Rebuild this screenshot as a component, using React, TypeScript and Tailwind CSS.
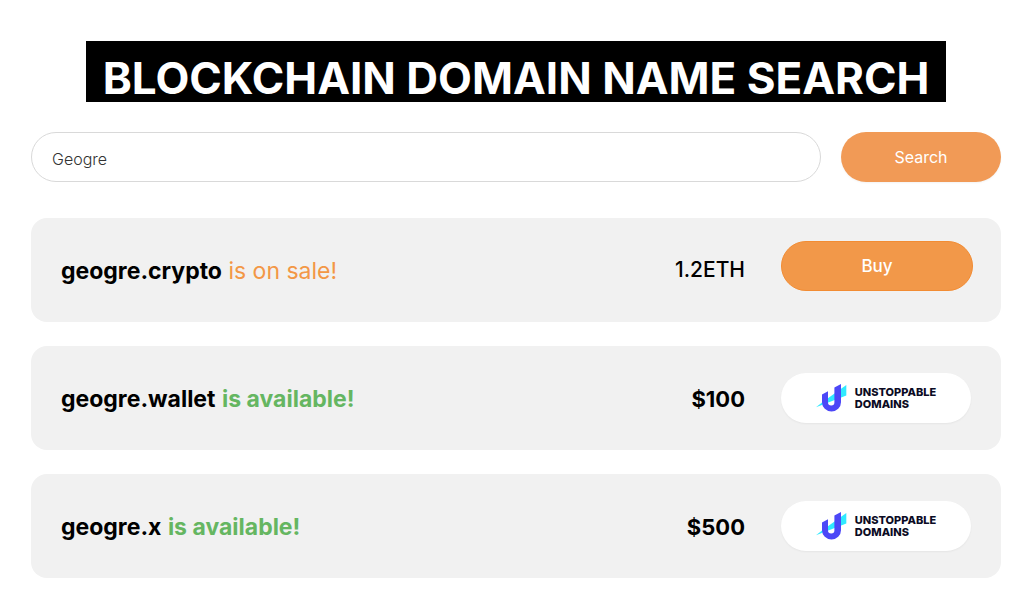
import React, { useState } from "react";

type Domain = {
  name: string;
  price: string;
  status: "sale" | "available";
};

const domains: Domain[] = [
  { name: "geogre.crypto", price: "1.2ETH", status: "sale" },
  { name: "geogre.wallet", price: "$100", status: "available" },
  { name: "geogre.x", price: "$500", status: "available" },
];

function UnstoppableLogo() {
  return (
    <svg width="31" height="28" viewBox="0 0 31 28" aria-hidden="true">
      <path d="M30.3 1v10.5L0 23.3 6 18.6z" fill="#2fe9ff" />
      <path
        d="M25 0v18.2a9.5 9.3 0 0 1-19 0V10.5l6-3.3v11.3a3.2 3 0 0 0 6.4 0V3.6z"
        fill="#4c47f7"
      />
    </svg>
  );
}

function DomainRow({ domain }: { domain: Domain }) {
  return (
    <li className="flex h-[104px] items-center rounded-2xl bg-[#f1f1f1] pl-[30px] pr-7">
      <p className="min-w-0 flex-1 pt-0.5 text-[23px]">
        <span className="font-bold text-black">{domain.name}</span>{" "}
        {domain.status === "sale" ? (
          <span className="text-[#f39746]">is on sale!</span>
        ) : (
          <span className="font-bold text-[#65b661]">is available!</span>
        )}
      </p>
      {domain.status === "sale" ? (
        <>
          <span className="mr-9 text-[21px] font-medium text-black">
            {domain.price}
          </span>
          <button
            type="button"
            className="mb-2 h-[50px] w-[192px] rounded-full border border-[#f28c33] bg-[#f29849] pt-0.5 text-[17px] font-medium text-white"
          >
            Buy
          </button>
        </>
      ) : (
        <>
          <span className="mr-9 pt-0.5 text-[22px] font-bold text-black">
            {domain.price}
          </span>
          <button
            type="button"
            className="mr-0.5 flex h-[50px] w-[190px] items-center justify-center gap-2 rounded-full bg-white text-left shadow-xs"
          >
            <UnstoppableLogo />
            <span className="flex flex-col text-[11px] font-extrabold leading-3 text-[#0b0b24]">
              <span>UNSTOPPABLE</span>
              <span>DOMAINS</span>
            </span>
          </button>
        </>
      )}
    </li>
  );
}

export default function App() {
  const [query, setQuery] = useState("Geogre");
  return (
    <main className="min-h-screen bg-white pb-9 pl-[31px] pr-8 pt-[41px] font-['Inter',sans-serif]">
      <h1 className="mx-auto w-full max-w-[860px] bg-black pt-[14px] text-center text-[44px] font-bold leading-[47px] text-white">
        BLOCKCHAIN DOMAIN NAME SEARCH
      </h1>
      <form
        className="mt-[30px] flex gap-5"
        onSubmit={(e) => e.preventDefault()}
      >
        <input
          type="text"
          aria-label="Domain name"
          className="h-[50px] min-w-0 flex-1 rounded-full border border-[#d9d9d9] px-5 pt-1 text-base font-light text-[#333] outline-none"
          value={query}
          onChange={(e) => setQuery(e.target.value)}
        />
        <button
          type="submit"
          className="h-[50px] w-40 rounded-full bg-[#f19a56] text-base text-white shadow-xs"
        >
          Search
        </button>
      </form>
      <ul className="mt-9 space-y-6">
        {domains.map((domain) => (
          <DomainRow key={domain.name} domain={domain} />
        ))}
      </ul>
    </main>
  );
}
